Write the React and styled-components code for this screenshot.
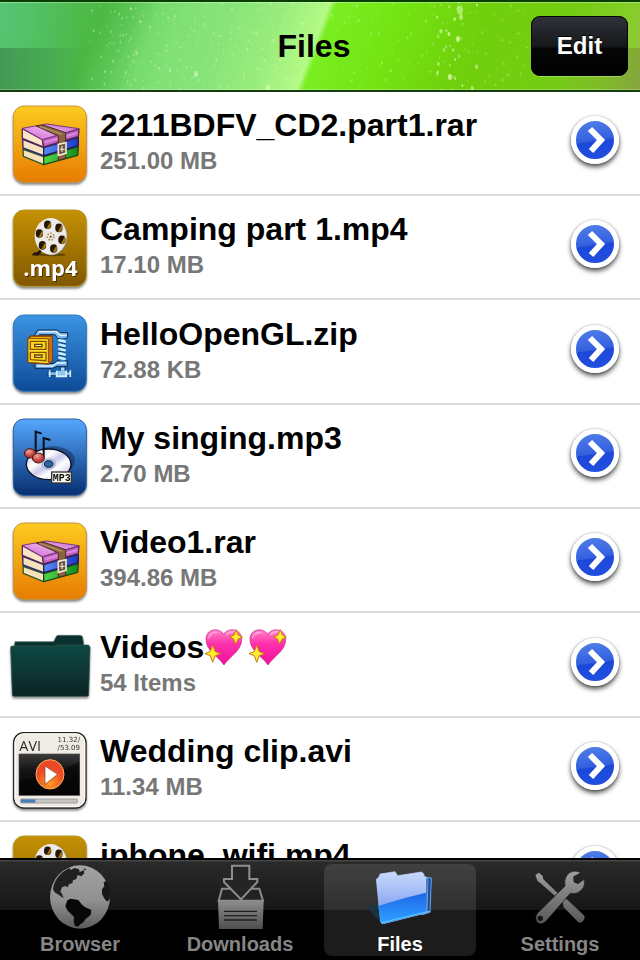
import React, { useState } from 'react';
import styled, { createGlobalStyle } from 'styled-components';

const GlobalStyle = createGlobalStyle`
  * {
    box-sizing: border-box;
  }

  body {
    margin: 0;
    background: #fff;
    font-family: 'Liberation Sans', Arial, Helvetica, sans-serif;
  }

  button {
    font-family: inherit;
    border: none;
    padding: 0;
    cursor: pointer;
  }
`;

const Screen = styled.div`
  display: flex;
  flex-direction: column;
  height: 100vh;
  overflow: hidden;
`;

const Header = styled.header`
  position: relative;
  display: grid;
  grid-template-columns: 1fr auto 1fr;
  align-items: center;
  flex: none;
  height: 92px;
  padding: 0 12px;
  border-top: 2px solid #073f00;
  border-bottom: 2px solid #143f0c;
  background:
    linear-gradient(90deg, rgba(90, 200, 160, 0.4), rgba(90, 200, 160, 0) 14%),
    linear-gradient(
      111deg,
      #54c258 0%,
      #4dbb4a 10%,
      #4cb944 16%,
      #5cc755 20%,
      #76da6c 24%,
      #80e075 28%,
      #88e478 35%,
      #98ec7c 42%,
      #b4fa86 49%,
      #7aee22 50%,
      #74e412 60%,
      #70d00c 72%,
      #74cc12 86%,
      #86ce28 94%,
      #98c04a 100%
    );
`;

const Spray = styled.svg`
  position: absolute;
  inset: 0;
  width: 100%;
  height: 100%;
`;

const Title = styled.h1`
  position: relative;
  grid-column: 2;
  margin: 0 12px 0 0;
  font-size: 32px;
  line-height: 36px;
  color: #000;
`;

const EditButton = styled.button`
  position: relative;
  justify-self: end;
  width: 97px;
  height: 60px;
  border-radius: 9px;
  background: linear-gradient(#30333a 0%, #17181b 50%, #060607 54%, #000 100%);
  box-shadow: inset 0 0 0 1px #050505, 0 1px 0 rgba(255, 255, 255, 0.3);
  color: #fff;
  font-size: 24px;
  font-weight: bold;
  line-height: 28px;
  text-shadow: 0 -1px 0 #000;
`;

const FileList = styled.ul`
  flex: 1;
  min-height: 0;
  overflow: hidden;
  margin: 0;
  padding: 0;
  list-style: none;
`;

const FileRow = styled.li`
  display: flex;
  align-items: center;
  gap: 10px;
  height: 104px;
  padding: 0 20px 0 10px;
  border-bottom: 2px solid #d9d9d9;

  &:nth-child(3n) {
    height: 105px;
  }
`;

const FileIcon = styled.svg`
  flex: none;
  width: 80px;
  height: 80px;
  overflow: visible;
  filter: drop-shadow(0 2px 1px rgba(0, 0, 0, 0.45));
`;

const FileText = styled.div`
  flex: 1;
  min-width: 0;
  display: flex;
  flex-direction: column;
  gap: 4px;
  padding-bottom: 4px;
`;

const FileName = styled.h2`
  display: flex;
  align-items: center;
  margin: 0;
  font-size: 32px;
  line-height: 36px;
  color: #000;
  white-space: nowrap;
`;

const FileSize = styled.p`
  margin: 0;
  font-size: 24px;
  font-weight: bold;
  line-height: 28px;
  color: #777;
`;

const Heart = styled.svg`
  flex: none;
  width: 44px;
  height: 36px;
`;

const OpenButton = styled.button`
  display: flex;
  flex: none;
  width: 48px;
  height: 48px;
  margin: 0 1px 6px 0;
  border: 5px solid #fff;
  border-radius: 50%;
  background: linear-gradient(172deg, #5080ea 0%, #3560de 50%, #1c48d8 54%, #2450e2 100%);
  box-shadow: 0 3px 5px rgba(0, 0, 0, 0.7), 0 0 2px rgba(0, 0, 0, 0.3);
`;

const TabBar = styled.nav`
  display: grid;
  grid-template-columns: repeat(4, 1fr);
  flex: none;
  height: 102px;
  padding-top: 4px;
  border-top: 2px solid #000;
  background: linear-gradient(#454545 0, #454545 1px, #2a2a2a 2px, #161616 50px, #000 50px);
  background-origin: padding-box;
  background-repeat: no-repeat;
  background-color: #000;
`;

const Tab = styled.button`
  display: flex;
  flex-direction: column;
  align-items: center;
  height: 92px;
  margin: 0 4px;
  border-radius: 8px;
  background: ${({ $active }) => ($active ? 'rgba(255, 255, 255, 0.11)' : 'transparent')};
  color: ${({ $active }) => ($active ? '#fff' : '#868686')};
  font-size: 20px;
  font-weight: bold;
  line-height: 24px;
`;

const TabIcon = styled.svg`
  width: 72px;
  height: 68px;
`;

// Water drops in the header: [x, y, radius, opacity]
const drops = [];
let seed = 11;
const random = () => {
  seed = (seed * 16807) % 2147483647;
  return seed / 2147483647;
};
for (let i = 0; i < 330; i += 1) {
  const x = 90 + random() * 215;
  drops.push([x, random() * 88, 0.4 + random() * 0.7, 0.1 + random() * 0.35]);
}
for (let i = 0; i < 150; i += 1) {
  const x = 330 + random() * 210;
  drops.push([x, random() * 88, 0.4 + random() * 0.7, 0.1 + random() * 0.3]);
}
for (let i = 0; i < 22; i += 1) {
  drops.push([436 + random() * 42, random() * 88, 0.8 + random() * 0.8, 0.3 + random() * 0.4]);
}
drops.push([460, 8, 3, 0.5], [461, 15, 2, 0.5], [458, 37, 2, 0.7], [450, 75, 2, 0.7], [196, 72, 2, 0.5], [268, 86, 2, 0.6]);

function HeaderSpray() {
  return (
    <Spray viewBox="0 0 640 88" preserveAspectRatio="none" aria-hidden="true">
      <defs>
        <linearGradient id="edgeShade">
          <stop offset="0" stopColor="#204018" stopOpacity=".32" />
          <stop offset=".14" stopColor="#204018" stopOpacity="0" />
          <stop offset=".86" stopColor="#505020" stopOpacity="0" />
          <stop offset="1" stopColor="#505020" stopOpacity=".25" />
        </linearGradient>
      </defs>
      <path d="M0 46H640V88H0z" fill="url(#edgeShade)" />
      <path d="M0 .5H640" stroke="#fff" strokeOpacity=".35" />
      <path d="M0 87.500H640" stroke="#fff" strokeOpacity=".25" />
      {drops.map(([x, y, r, opacity], i) => (
        <ellipse key={i} cx={x} cy={y} rx={r} ry={r * 1.5} fill="#e8ffc8" opacity={opacity} />
      ))}
    </Spray>
  );
}

function Tile({ id, from, to, edge }) {
  return (
    <>
      <defs>
        <linearGradient id={id} x2="0" y2="1">
          <stop offset="0" stopColor={from} />
          <stop offset="1" stopColor={to} />
        </linearGradient>
      </defs>
      <rect x="40" y="30" width="219" height="229" rx="32" fill={`url(#${id})`} stroke={edge} strokeWidth="3" />
    </>
  );
}

function RarIcon() {
  return (
    <FileIcon viewBox="30 21 240 240" aria-hidden="true">
      <Tile id="rarTile" from="#fcca20" to="#e77c02" edge="#c8963c" />
      <defs>
        <linearGradient id="rarTop" x1="0" y1="1" x2="1" y2="0">
          <stop offset="0" stopColor="#cf68cf" />
          <stop offset=".5" stopColor="#e6a2e8" />
          <stop offset="1" stopColor="#cb6acb" />
        </linearGradient>
        <linearGradient id="rarGreen">
          <stop offset="0" stopColor="#53d648" />
          <stop offset="1" stopColor="#128a1e" />
        </linearGradient>
        <linearGradient id="rarBlue">
          <stop offset="0" stopColor="#5a8cf4" />
          <stop offset="1" stopColor="#1d35c8" />
        </linearGradient>
      </defs>
      <path d="M69 160L131 182V206L70 181z" fill="#f7e2bd" stroke="#2f5a26" strokeWidth="4" strokeLinejoin="round" />
      <path d="M131 182L235 152L233 178L131 206z" fill="url(#rarGreen)" stroke="#174d17" strokeWidth="4" strokeLinejoin="round" />
      <path d="M68 130L131 155V179L69 156z" fill="#f7e2bd" stroke="#28286a" strokeWidth="4" strokeLinejoin="round" />
      <path d="M131 155L235 124V149L131 179z" fill="url(#rarBlue)" stroke="#1c1c60" strokeWidth="4" strokeLinejoin="round" />
      <path d="M67 98L127 131L131 153L67 127z" fill="#fae6c6" stroke="#5b285c" strokeWidth="4" strokeLinejoin="round" />
      <path d="M127 131L237 99L235 121L131 153z" fill="#c765c8" stroke="#5b285c" strokeWidth="4" strokeLinejoin="round" />
      <path d="M135 139L232 111" stroke="#dc8fde" strokeWidth="5" />
      <path d="M67 97L128 86L140 84L237 98L127 131z" fill="url(#rarTop)" stroke="#7c3a7e" strokeWidth="3" strokeLinejoin="round" />
      <path d="M109 90L129 87L197 110V187L175 193V120z" fill="#8b6242" stroke="#4a2d1a" strokeWidth="3" />
      <path d="M118 91L186 115" stroke="#b48b66" strokeWidth="5" />
      <path d="M175 145L198 140V172L175 178z" fill="#6b5040" stroke="#eee8d0" strokeWidth="5" />
      <path d="M186 150V168M180 160H194" stroke="#dddac8" strokeWidth="4" />
    </FileIcon>
  );
}

function Mp4Icon() {
  const holes = [0, 1, 2, 3, 4, 5].map((n) => {
    const angle = ((n * 60 - 105) * Math.PI) / 180;
    return [152 + Math.cos(angle) * 35, 110 + Math.sin(angle) * 37];
  });
  return (
    <FileIcon viewBox="30 21 240 240" aria-hidden="true">
      <Tile id="mp4Tile" from="#c59103" to="#805700" edge="#b49a22" />
      <ellipse cx="153" cy="164" rx="44" ry="5" fill="#493200" opacity=".7" />
      <path d="M118 149C116 157 108 156 101 158L95 166L112 167C121 163 124 157 127 151z" fill="#20160a" />
      <ellipse cx="156" cy="110" rx="46" ry="56" fill="#8c8577" />
      <ellipse cx="152" cy="109" rx="48" ry="55" fill="#eceae8" />
      {holes.map(([x, y], i) => (
        <g key={i}>
          <ellipse cx={x} cy={y} rx="11" ry="13" fill="#251705" />
          <path d={`M${x - 3} ${y + 12}A12 13 0 0 0 ${x + 8} ${y - 9}z`} fill="#a67a0b" />
        </g>
      ))}
      <circle cx="152" cy="110" r="10" fill="none" stroke="#aa862b" strokeWidth="5" strokeDasharray="4 5" />
      <circle cx="152" cy="110" r="3" fill="#4c390f" />
      <text x="154" y="231" textAnchor="middle" fontFamily="Open Sans, sans-serif" fontSize="66" fontWeight="700" fill="#493000">.mp4</text>
      <text x="151" y="227" textAnchor="middle" fontFamily="Open Sans, sans-serif" fontSize="66" fontWeight="700" fill="#fff">.mp4</text>
    </FileIcon>
  );
}

function ZipIcon() {
  return (
    <FileIcon viewBox="30 21 240 240" aria-hidden="true">
      <Tile id="zipTile" from="#3b94e2" to="#0d4b98" edge="#3376ba" />
      <g transform="translate(0 3)">
        <path d="M104 88L113 72H172L181 80H203V95L194 98H173L165 86H118L111 93z" fill="#80b9ee" stroke="#0a294d" strokeWidth="3" />
        <path d="M116 77H168L181 88H200" fill="none" stroke="#dff3ff" strokeWidth="4" />
        <path d="M105 172V187H158L171 181H202V164H172L162 173z" fill="#72ace8" stroke="#0a294d" strokeWidth="3" />
        <path d="M111 180H157L171 171H198" fill="none" stroke="#e0f4ff" strokeWidth="4" />
        <path d="M180 97H193V165H180z" fill="#337cc1" />
        {[103, 116, 129, 142, 155].map((y) => (
          <path key={y} d={`M178 ${y}L194 ${y + 4}`} stroke="#c9eaff" strokeWidth="8" strokeLinecap="round" />
        ))}
        <path d="M176 109L197 113M176 122L197 126M176 135L197 139M176 148L197 152" stroke="#123d72" strokeWidth="3" />
        <path d="M181 183H195V196H181z" fill="#a9dafb" stroke="#123e70" strokeWidth="3" />
        <path d="M144 197H215V209H144z" fill="#7eb9eb" stroke="#0c3d70" strokeWidth="3" />
        <path d="M149 193V213M211 193V213M170 194V211H199V194" stroke="#d8f1ff" fill="#91c7f0" strokeWidth="5" />
        <path d="M84 98L93 90H156V164L145 174L84 169z" fill="#f2ac08" stroke="#793808" strokeWidth="4" />
        <path d="M145 99L156 91V163L145 173z" fill="#cc6c0b" />
        <path d="M84 98H145V173L84 169z" fill="#ffe326" stroke="#8b490c" strokeWidth="3" />
        <path d="M91 106H138V130H91zM91 139H138V164L91 161z" fill="#fbd719" stroke="#8a510c" strokeWidth="4" />
        <path d="M104 115H126V122H104zM104 147H126V154H104z" fill="#fff2a0" stroke="#68400d" strokeWidth="4" />
      </g>
    </FileIcon>
  );
}

function Mp3Icon() {
  return (
    <FileIcon viewBox="30 21 240 240" aria-hidden="true">
      <Tile id="mp3Tile" from="#56a8ff" to="#062d70" edge="#2e5f9c" />
      <defs>
        <linearGradient id="disc" x1="0" y1="0" x2="1" y2="1">
          <stop offset="0" stopColor="#babce2" />
          <stop offset=".35" stopColor="#fff" />
          <stop offset=".5" stopColor="#c9c9e8" />
          <stop offset=".65" stopColor="#fff" />
          <stop offset="1" stopColor="#b5b4dd" />
        </linearGradient>
        <radialGradient id="noteBall" cx=".4" cy=".3">
          <stop offset="0" stopColor="#f3a39a" />
          <stop offset="1" stopColor="#bc3d38" />
        </radialGradient>
      </defs>
      <g transform="translate(0 5)">
        <ellipse cx="161" cy="150" rx="64" ry="43" fill="#142e58" opacity=".55" />
        <ellipse cx="146" cy="161" rx="67" ry="46" fill="url(#disc)" stroke="#0b1224" strokeWidth="4" />
        <path d="M138 151L104 126L128 118zM154 169L180 200L145 204z" fill="#fff" opacity=".7" />
        <ellipse cx="146" cy="160" rx="20" ry="16" fill="#c8cdec" stroke="#8990bf" strokeWidth="2" />
        <ellipse cx="146" cy="160" rx="13" ry="10" fill="#2b64a4" stroke="#111c33" strokeWidth="3" />
        <path d="M107 126V63L125 69M131 142V82L151 88" fill="none" stroke="#080e18" strokeWidth="6" />
        <ellipse cx="90" cy="128" rx="17" ry="14" fill="url(#noteBall)" stroke="#401515" strokeWidth="3" />
        <ellipse cx="115" cy="142" rx="18" ry="15" fill="url(#noteBall)" stroke="#401515" strokeWidth="3" />
        <rect x="155" y="184" width="59" height="33" fill="#faf9ee" stroke="#343434" strokeWidth="4" />
        <text x="185" y="211" textAnchor="middle" fontFamily="Liberation Mono, monospace" fontSize="30" fontWeight="bold" fill="#111">MP3</text>
      </g>
    </FileIcon>
  );
}

function FolderIcon() {
  return (
    <FileIcon viewBox="30 27 240 240" aria-hidden="true">
      <defs>
        <linearGradient id="folderFront" x2="0" y2="1">
          <stop offset="0" stopColor="#0c4843" />
          <stop offset=".5" stopColor="#0e3735" />
          <stop offset="1" stopColor="#0b2324" />
        </linearGradient>
      </defs>
      <path d="M43 93L45 77H161L169 61Q171 58 176 58H241Q247 59 248 64L252 93z" fill="#0a302e" stroke="#53716d" strokeWidth="2" />
      <path d="M32 96Q31 90 37 90H162L176 87H264Q270 88 270 94L266 236Q266 241 261 241H42Q37 241 37 236z" fill="url(#folderFront)" stroke="#395450" strokeWidth="2" />
    </FileIcon>
  );
}

function AviIcon() {
  return (
    <FileIcon viewBox="30 24 240 240" aria-hidden="true">
      <defs>
        <linearGradient id="aviScreen" x2="0" y2="1">
          <stop offset="0" stopColor="#3a3a3a" />
          <stop offset=".4" stopColor="#141414" />
          <stop offset="1" stopColor="#080808" />
        </linearGradient>
        <radialGradient id="aviPlay" cx=".5" cy=".8">
          <stop offset="0" stopColor="#ff9b20" />
          <stop offset="1" stopColor="#ed4928" />
        </radialGradient>
      </defs>
      <rect x="41" y="35" width="217" height="226" rx="30" fill="#f0ece5" stroke="#292622" strokeWidth="4" />
      <rect x="45" y="39" width="209" height="218" rx="26" fill="none" stroke="#fff" strokeWidth="3" />
      <text x="58" y="91" fontFamily="Open Sans, sans-serif" fontSize="43" fill="#292929">AVI</text>
      <text x="240" y="64" textAnchor="end" fontFamily="DejaVu Sans, sans-serif" fontSize="21" fill="#333">11.32/</text>
      <text x="240" y="88" textAnchor="end" fontFamily="DejaVu Sans, sans-serif" fontSize="21" fill="#333">/53.09</text>
      <rect x="57" y="99" width="182" height="124" fill="url(#aviScreen)" stroke="#4a4a4a" strokeWidth="2" />
      <path d="M58 178Q150 165 238 122V222H58z" fill="#000" opacity=".5" />
      <ellipse cx="150" cy="160" rx="42" ry="44" fill="url(#aviPlay)" stroke="#ffae54" strokeWidth="3" />
      <path d="M135 135V190L173 160z" fill="#fff" stroke="#82381d" strokeWidth="2" />
      <rect x="62" y="234" width="170" height="12" rx="2" fill="#c6c6c6" stroke="#858585" strokeWidth="2" />
      <rect x="63" y="235" width="43" height="10" fill="#477db8" />
    </FileIcon>
  );
}

function SparkleHeart() {
  return (
    <Heart viewBox="614 39 132 108" role="img" aria-label="sparkling heart">
      <defs>
        <linearGradient id="heartFill" x2="0" y2="1">
          <stop offset="0" stopColor="#ff85c8" />
          <stop offset=".4" stopColor="#ff2fab" />
          <stop offset="1" stopColor="#f0109c" />
        </linearGradient>
      </defs>
      <path d="M673 55C662 34 620 36 620 70C620 104 654 119 674 147C693 120 727 104 727 70C727 36 684 34 673 55z" fill="url(#heartFill)" stroke="#cb2385" strokeWidth="2" />
      <path d="M628 65Q634 48 653 49M682 56Q691 46 704 47" fill="none" stroke="#ffc6e7" strokeWidth="5" strokeLinecap="round" opacity=".6" />
      <path d="M640 87L648 107L664 113L648 119L640 139L633 119L617 113L633 106z" fill="#ffec2e" stroke="#c77912" strokeWidth="3" />
      <path d="M711 41L717 57L729 63L717 69L708 84L703 69L691 63L704 57z" fill="#ffec2e" stroke="#c77912" strokeWidth="3" />
    </Heart>
  );
}

function GlobeTabIcon() {
  return (
    <TabIcon viewBox="132 42 216 204" aria-hidden="true">
      <defs>
        <linearGradient id="globeFill" x2="0" y2="1">
          <stop offset="0" stopColor="#a2a2a2" />
          <stop offset=".55" stopColor="#919191" />
          <stop offset="1" stopColor="#5c5c5c" />
        </linearGradient>
      </defs>
      <ellipse cx="240" cy="141" rx="90" ry="95" fill="url(#globeFill)" />
      <path d="M174 81Q188 63 209 54L212 60L224 54L237 58L239 66L251 61L253 70L244 79L233 75L229 87L219 91L217 99L207 103L203 112L195 108L186 112L181 125L188 134L185 141L177 135L164 127L159 118Q161 98 174 81z" fill="#202020" />
      <path d="M251 55L259 58L254 62zM184 133L192 144L184 141z" fill="#202020" />
      <path d="M202 151L212 146L235 150L244 162L253 170L274 180L272 195L257 207L250 217L239 224L235 230L225 228L221 216L222 201L211 190L203 182L196 169z" fill="#080808" />
      <path d="M311 96L321 94Q333 119 329 148L321 155L312 144L306 131L306 118L313 109z" fill="#171717" />
    </TabIcon>
  );
}

function DownloadTabIcon() {
  return (
    <TabIcon viewBox="612 42 216 204" aria-hidden="true">
      <defs>
        <linearGradient id="boxFill" x2="0" y2="1">
          <stop offset="0" stopColor="#8d8d8d" />
          <stop offset="1" stopColor="#4f4f4f" />
        </linearGradient>
      </defs>
      <path d="M666 116H778L789 152H656z" fill="#222" stroke="#8b8b8b" strokeWidth="6" />
      <path d="M654 150H791L788 237H657z" fill="url(#boxFill)" />
      <path d="M696 47H748V87H772V96L723 148L672 96V87H696z" fill="#252525" stroke="#8f8f8f" strokeWidth="6" />
      <path d="M672 184H771M672 197H771M672 210H771" stroke="#202020" strokeWidth="4" />
    </TabIcon>
  );
}

function FilesTabIcon() {
  return (
    <TabIcon viewBox="132 42 216 204" aria-hidden="true">
      <defs>
        <linearGradient id="blueTop" x2="0" y2="1">
          <stop offset="0" stopColor="#c9dafd" />
          <stop offset="1" stopColor="#6a8eea" />
        </linearGradient>
        <linearGradient id="blueBottom" x1="0" y1="0" x2="0" y2="1">
          <stop offset="0" stopColor="#1e66ea" />
          <stop offset="1" stopColor="#2ea4ff" />
        </linearGradient>
      </defs>
      <path d="M147 168L170 161L187 218Q163 202 147 179z" fill="#173746" opacity=".8" />
      <path d="M310 81L334 84L330 187L306 194z" fill="#164d9c" stroke="#6da5ee" strokeWidth="3" />
      <path d="M319 85L324 86L321 189" fill="none" stroke="#a4ccff" strokeWidth="2" />
      <path d="M169 88L177 81L180 72L225 65L233 77L304 66L311 71L313 80L318 81V189L190 221Q183 221 182 215z" fill="url(#blueTop)" stroke="#b9d6ff" strokeWidth="2" />
      <path d="M175 168Q237 147 318 128V189L190 221Q183 221 182 215z" fill="url(#blueBottom)" />
      <path d="M185 218L318 186L331 184" fill="none" stroke="#6bc5ff" strokeWidth="3" />
    </TabIcon>
  );
}

function SettingsTabIcon() {
  return (
    <TabIcon viewBox="612 42 216 204" aria-hidden="true">
      <defs>
        <linearGradient id="toolFill" x1="0" y1="60" x2="0" y2="220" gradientUnits="userSpaceOnUse">
          <stop offset="0" stopColor="#a0a0a0" />
          <stop offset="1" stopColor="#585858" />
        </linearGradient>
      </defs>
      <path d="M646 75L657 68L668 78L670 88L726 142L742 149L793 197Q797 209 782 218L774 216L731 172L729 160L720 151L660 98L653 94z" fill="url(#toolFill)" />
      <path d="M783 68Q758 56 741 75Q731 90 735 108L652 190Q642 207 654 218Q666 226 679 212L751 130Q775 135 790 113Q796 102 792 88L774 101L762 96L761 80z" fill="url(#toolFill)" stroke="#181818" strokeWidth="2" />
      <circle cx="661" cy="205" r="8" fill="#111" />
    </TabIcon>
  );
}

const files = [
  { name: '2211BDFV_CD2.part1.rar', size: '251.00 MB', icon: RarIcon },
  { name: 'Camping part 1.mp4', size: '17.10 MB', icon: Mp4Icon },
  { name: 'HelloOpenGL.zip', size: '72.88 KB', icon: ZipIcon },
  { name: 'My singing.mp3', size: '2.70 MB', icon: Mp3Icon },
  { name: 'Video1.rar', size: '394.86 MB', icon: RarIcon },
  { name: 'Videos', size: '54 Items', icon: FolderIcon, hearts: 2 },
  { name: 'Wedding clip.avi', size: '11.34 MB', icon: AviIcon },
  { name: 'iphone_wifi.mp4', size: '8.54 MB', icon: Mp4Icon },
];

const tabs = [
  { label: 'Browser', icon: GlobeTabIcon },
  { label: 'Downloads', icon: DownloadTabIcon },
  { label: 'Files', icon: FilesTabIcon },
  { label: 'Settings', icon: SettingsTabIcon },
];

function App() {
  const [activeTab, setActiveTab] = useState('Files');

  return (
    <>
      <GlobalStyle />
      <Screen>
        <Header>
          <HeaderSpray />
          <Title>Files</Title>
          <EditButton type="button">Edit</EditButton>
        </Header>

        <FileList>
          {files.map(({ name, size, icon: Icon, hearts = 0 }) => (
            <FileRow key={name}>
              <Icon />
              <FileText>
                <FileName>
                  {name}
                  {Array.from({ length: hearts }, (_, i) => (
                    <SparkleHeart key={i} />
                  ))}
                </FileName>
                <FileSize>{size}</FileSize>
              </FileText>
              <OpenButton type="button" aria-label={`Open ${name}`}>
                <svg viewBox="0 0 38 38" width="38" height="38" aria-hidden="true">
                  <path d="M14 8L25 19L15 30" fill="none" stroke="#fff" strokeWidth="6" />
                </svg>
              </OpenButton>
            </FileRow>
          ))}
        </FileList>

        <TabBar>
          {tabs.map(({ label, icon: Icon }) => (
            <Tab
              key={label}
              type="button"
              $active={label === activeTab}
              aria-current={label === activeTab ? 'page' : undefined}
              onClick={() => setActiveTab(label)}
            >
              <Icon />
              {label}
            </Tab>
          ))}
        </TabBar>
      </Screen>
    </>
  );
}

export default App;
